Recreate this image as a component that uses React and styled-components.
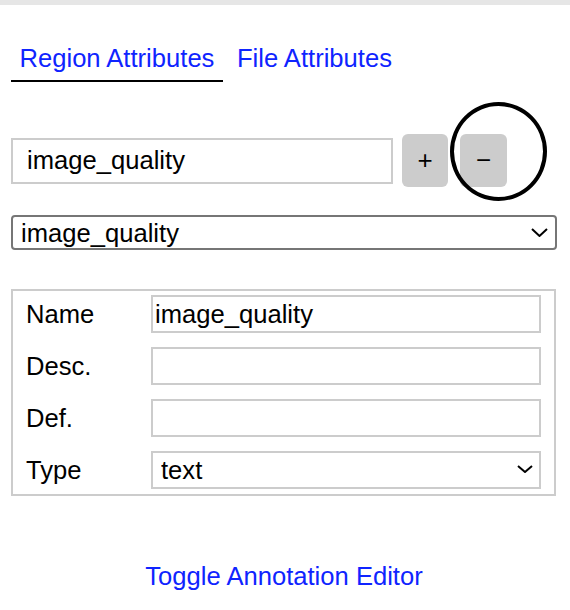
import styled, { createGlobalStyle } from "styled-components";

const GlobalStyle = createGlobalStyle`
  html, body {
    margin: 0;
    background: #fff;
    font-family: "Liberation Sans", Arial, sans-serif;
  }
`;

const TopBar = styled.div`
  height: 5px;
  background: #e6e6e6;
`;

const Panel = styled.div`
  padding: 0 13px 0 11px;
  font-size: 25.6px;
  color: #000;
`;

const TabBar = styled.div`
  display: flex;
  gap: 5.5px;
  margin-top: 39px;
`;

const Tab = styled.div`
  padding: 0 8.5px 7px;
  color: #0f24ff;
  border-bottom: 2px solid ${(p) => (p.$active ? "#000" : "transparent")};
  cursor: pointer;
`;

const AttrRow = styled.div`
  display: flex;
  align-items: center;
  margin-top: 52px;
`;

const NameInput = styled.input`
  box-sizing: border-box;
  width: 382px;
  height: 46px;
  border: 2px solid #ccc;
  padding: 0 0 0 14px;
  font: inherit;
  color: #000;
  outline: none;
`;

const SquareButton = styled.button`
  position: relative;
  width: ${(p) => p.$w}px;
  height: 53px;
  margin-left: ${(p) => p.$gap}px;
  border: none;
  border-radius: 6px;
  background: #ccc;
  font-family: inherit;
  font-size: 26px;
  color: #000;
  padding: 0;
`;

const Circle = styled.span`
  position: absolute;
  left: -10px;
  top: -32px;
  width: 97px;
  height: 99px;
  box-sizing: border-box;
  border: 4px solid #000;
  border-radius: 50%;
  pointer-events: none;
`;

const SelectWrap = styled.div`
  position: relative;
  margin-top: ${(p) => p.$top || 0}px;
`;

const Select = styled.select`
  appearance: none;
  box-sizing: border-box;
  width: 100%;
  height: ${(p) => (p.$plain ? 38 : 35)}px;
  border: 2px solid ${(p) => (p.$plain ? "#ccc" : "#767676")};
  border-radius: ${(p) => (p.$plain ? 0 : 4)}px;
  padding: 0 0 0 8px;
  background: #fff;
  font: inherit;
  color: #000;
  outline: none;
`;

const Chevron = styled.svg`
  position: absolute;
  right: ${(p) => p.$right}px;
  top: ${(p) => p.$top}px;
  pointer-events: none;
`;

const AttrBox = styled.div`
  display: grid;
  grid-template-columns: 125px 1fr;
  row-gap: 14px;
  margin: 39px 1px 0 0;
  padding: 4px 13px 5px;
  border: 2px solid #ccc;
`;

const Label = styled.div`
  display: flex;
  align-items: center;
  height: 38px;
`;

const Field = styled.input`
  box-sizing: border-box;
  width: 100%;
  height: 38px;
  border: 2px solid #ccc;
  padding: 0 0 0 2px;
  font: inherit;
  color: #000;
  outline: none;
`;

const ToggleLink = styled.div`
  margin-top: 66px;
  text-align: center;
  color: #0f24ff;
  cursor: pointer;
`;

function ChevronIcon({ right, top, w = 17, h = 9 }) {
  return (
    <Chevron $right={right} $top={top} width={w} height={h} viewBox={`0 0 ${w} ${h}`}>
      <path
        d={`M1 1 L${w / 2} ${h - 1} L${w - 1} 1`}
        fill="none"
        stroke="#000"
        strokeWidth="2"
      />
    </Chevron>
  );
}

export default function App() {
  return (
    <>
      <GlobalStyle />
      <TopBar />
      <Panel>
        <TabBar>
          <Tab $active>Region Attributes</Tab>
          <Tab>File Attributes</Tab>
        </TabBar>

        <AttrRow>
          <NameInput defaultValue="image_quality" />
          <SquareButton $w={46} $gap={9}>+</SquareButton>
          <SquareButton $w={47} $gap={12}>
            −
            <Circle />
          </SquareButton>
        </AttrRow>

        <SelectWrap $top={28}>
          <Select defaultValue="image_quality">
            <option value="image_quality">image_quality</option>
          </Select>
          <ChevronIcon right={9} top={13} />
        </SelectWrap>

        <AttrBox>
          <Label>Name</Label>
          <Field defaultValue="image_quality" />
          <Label>Desc.</Label>
          <Field />
          <Label>Def.</Label>
          <Field />
          <Label>Type</Label>
          <SelectWrap>
            <Select $plain defaultValue="text">
              <option value="text">text</option>
            </Select>
            <ChevronIcon right={8} top={14} w={16} h={8} />
          </SelectWrap>
        </AttrBox>

        <ToggleLink>Toggle Annotation Editor</ToggleLink>
      </Panel>
    </>
  );
}
